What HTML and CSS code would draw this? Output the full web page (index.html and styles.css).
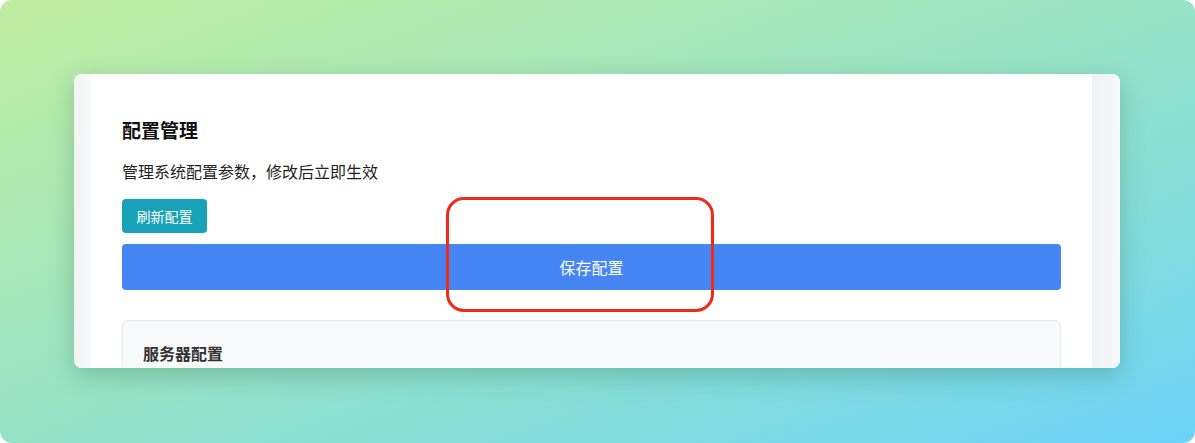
FILE: index.html
```html
<!DOCTYPE html>
<html lang="zh-CN">
<head>
    <meta charset="UTF-8">
    <meta name="viewport" content="width=device-width, initial-scale=1.0">
    <title>配置管理</title>
    <link rel="stylesheet" href="styles.css">
</head>
<body>
    <div class="stage">
        <div class="window">
            <div class="side side-left"></div>
            <div class="main">
                <h2 class="title">配置管理</h2>
                <p class="desc">管理系统配置参数，修改后立即生效</p>
                <button class="btn btn-refresh">刷新配置</button>
                <button class="btn btn-save">保存配置</button>
                <div class="card">
                    <h3 class="card-title">服务器配置</h3>
                </div>
                <div class="highlight"></div>
            </div>
            <div class="side side-right"></div>
        </div>
    </div>
</body>
</html>
```

FILE: styles.css
```css
html, body {
    margin: 0;
    padding: 0;
    background: #ffffff;
}
body {
    font-family: "Noto Sans CJK SC", "Noto Sans", Arial, sans-serif;
}
.stage {
    width: 1195px;
    height: 443px;
    border-radius: 12px;
    overflow: hidden;
    background: linear-gradient(160deg, #c1eea0 0%, #a4e6bb 35%, #8adfd3 65%, #6dd3f8 100%);
    padding: 74px 75px 0 74px;
    box-sizing: border-box;
}
.window {
    display: flex;
    height: 294px;
    background: #fff;
    border-radius: 8px;
    overflow: hidden;
    box-shadow: 0 8px 24px rgba(40, 110, 80, 0.3);
}
.side-left {
    width: 18px;
    background: linear-gradient(90deg, #f2f3f5, #f9fafb);
}
.side-right {
    width: 28px;
    background: linear-gradient(90deg, #f0f1f3, #f8f9fa);
}
.main {
    position: relative;
    width: 1000px;
    box-sizing: border-box;
    padding: 42px 31px 0 30px;
    overflow: hidden;
}
.title {
    margin: 0;
    font-size: 19px;
    line-height: 28px;
    font-weight: 700;
    color: #111;
}
.desc {
    margin: 15px 0 0;
    font-size: 16px;
    line-height: 24px;
    color: #1f1f1f;
}
.btn {
    display: block;
    border: none;
    color: #fff;
    font-family: inherit;
    border-radius: 4px;
    cursor: pointer;
}
.btn-refresh {
    margin-top: 16px;
    width: 85px;
    height: 34px;
    font-size: 14px;
    background: #17a2b8;
}
.btn-save {
    margin-top: 11px;
    width: 100%;
    height: 46px;
    font-size: 16px;
    background: #4585f4;
}
.card {
    margin-top: 30px;
    background: #f8f9fa;
    border: 1px solid #e6e8ea;
    border-radius: 6px;
    padding: 20px 20px 40px;
}
.card-title {
    margin: 0;
    font-size: 16px;
    line-height: 24px;
    font-weight: 700;
    color: #333;
}
.highlight {
    position: absolute;
    left: 354px;
    top: 123px;
    width: 262px;
    height: 109px;
    border: 3px solid #f02a18;
    border-radius: 18px;
}
```
